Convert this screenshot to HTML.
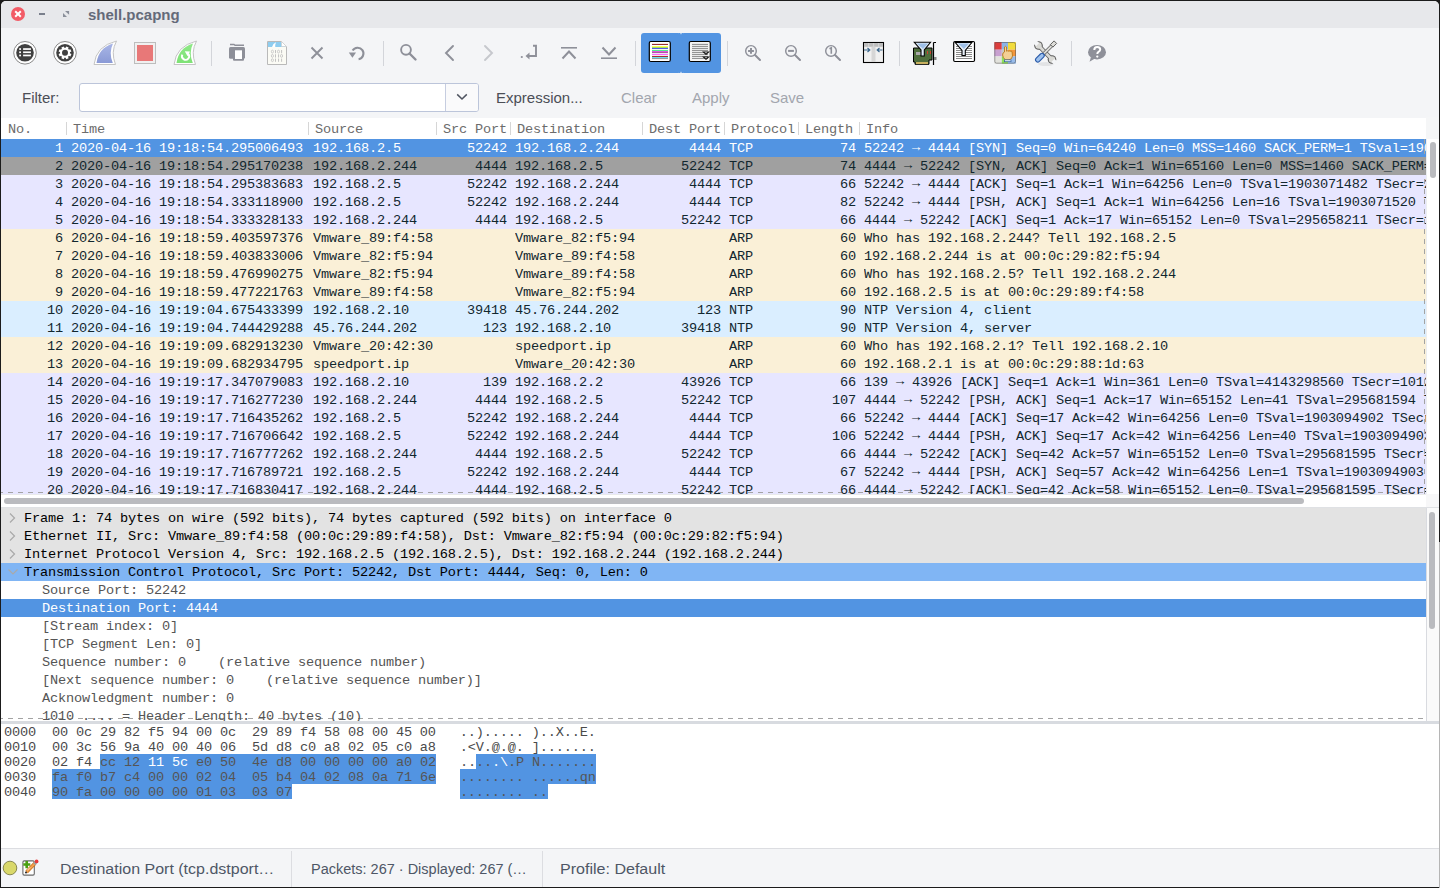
<!DOCTYPE html><html><head><meta charset="utf-8"><style>
*{margin:0;padding:0;box-sizing:border-box}
html,body{width:1440px;height:888px;overflow:hidden;background:#1b1b1b;position:relative}
.abs{position:absolute}
#win{position:absolute;left:1px;top:1px;width:1438px;height:886px;background:#f4f5f7;border-radius:5px 5px 0 0}
#title{position:absolute;left:1px;top:1px;width:1438px;height:27px;background:#e7e8eb;border-radius:5px 5px 0 0}
#title .t{position:absolute;left:87px;top:5px;font:bold 15px "Liberation Sans",sans-serif;color:#646a79}
#plist{position:absolute;left:1px;top:117px;width:1425px;height:377px;background:#fff;overflow:hidden}
.row{position:absolute;left:0;width:1425px;height:18px;font-family:"Liberation Mono",monospace;font-size:13.6px;letter-spacing:-0.16px;line-height:18px;color:#12272e;white-space:pre}
.row .c{position:absolute;top:1px;overflow:hidden;white-space:pre}
.row .cr{text-align:right}
.ar{position:relative;top:-1.5px;font-weight:bold}
.sel{background:#5294e2;color:#fff}
.syn{background:#a0a0a0}
.tcp{background:#e7e6ff}
.arp{background:#faf0d7}
.udp{background:#daeeff}
.hc{position:absolute;top:2px;font-family:"Liberation Mono",monospace;font-size:13.6px;letter-spacing:-0.16px;line-height:22px;color:#6c6c6c;white-space:pre}
.hsep{position:absolute;top:5px;width:1px;height:13px;background:#d6d6d6}
#details{position:absolute;left:1px;top:508px;width:1425px;height:213px;background:linear-gradient(#e3e3e3 0 1px,#fff 1px);overflow:hidden}
.drow{position:absolute;left:0px;width:1425px;height:18px;font-family:"Liberation Mono",monospace;font-size:13.6px;letter-spacing:-0.16px;line-height:18px;white-space:pre}
.drow .dt{position:absolute;top:1px}
.arr{position:absolute}
.top{background:#e3e3e3;color:#000}
.tcph{background:#80b5f4;color:#000}
.child{color:#555}
.dsel{background:#5294e2;color:#fff}
#hex{position:absolute;left:1px;top:724px;width:1438px;height:124px;background:#fff;overflow:hidden}
.hrow{position:absolute;left:3px;height:15px;font-family:"Liberation Mono",monospace;font-size:13.6px;letter-spacing:-0.16px;line-height:15px;color:#4a4a4a;white-space:pre}
.hrow .w{color:#fff}
.hrow .g{color:#555}
.lbl{position:absolute;font-family:"Liberation Sans",sans-serif;font-size:15px;line-height:18px;white-space:pre}
.st{position:absolute;top:11px;line-height:18px;white-space:pre;transform-origin:0 0}
#status{position:absolute;left:1px;top:848px;width:1438px;height:39px;background:#f4f5f7;border-top:1px solid #dcdde1;font-family:"Liberation Sans",sans-serif;font-size:14px;color:#4e5766}
.dashh{position:absolute;height:1px;background:repeating-linear-gradient(90deg,#a3a3a3 0 5px,transparent 5px 10px)}
.dashv{position:absolute;width:1px;background:repeating-linear-gradient(180deg,#a3a3a3 0 5px,transparent 5px 10px)}
</style></head><body>
<div id="win"></div>
<div id="title">
<svg class="abs" style="left:0;top:0" width="90" height="27"><circle cx="17" cy="13" r="7" fill="#f25b66"/><path d="M14.2 10.2 L19.8 15.8 M19.8 10.2 L14.2 15.8" stroke="#fff" stroke-width="2"/>
<rect x="38" y="12" width="6" height="2" fill="#7a7f8c"/>
<path d="M64 10 H68.1 V13.8 Z M62 12 V16.1 H66 Z" fill="#8a8f9a"/></svg>
<span class="t">shell.pcapng</span>
</div>
<svg class="abs" style="left:0;top:0" width="1440" height="117" viewBox="0 0 1440 117"><rect x="211.0" y="41" width="1" height="25" fill="#d3d5da"/><rect x="383.0" y="41" width="1" height="25" fill="#d3d5da"/><rect x="635.0" y="41" width="1" height="25" fill="#d3d5da"/><rect x="727.0" y="41" width="1" height="25" fill="#d3d5da"/><rect x="899.0" y="41" width="1" height="25" fill="#d3d5da"/><rect x="1071.0" y="41" width="1" height="25" fill="#d3d5da"/><circle cx="25" cy="52.8" r="11.3" fill="#fff" stroke="#8a8a8a" stroke-width="1"/><circle cx="25" cy="52.8" r="8.8" fill="#404040"/><rect x="19.2" y="48.2" width="1.8" height="1.7" fill="#fff"/><rect x="23.1" y="48.2" width="7.8" height="1.7" fill="#fff"/><rect x="19.2" y="51.4" width="1.8" height="1.7" fill="#fff"/><rect x="23.1" y="51.4" width="7.8" height="1.7" fill="#fff"/><rect x="19.2" y="54.6" width="1.8" height="1.7" fill="#fff"/><rect x="23.1" y="54.6" width="7.8" height="1.7" fill="#fff"/><circle cx="65" cy="52.8" r="11.3" fill="#fff" stroke="#8a8a8a" stroke-width="1"/><circle cx="65" cy="52.8" r="8.8" fill="#404040"/><g transform="translate(65 52.8)"><circle r="5" fill="#fff"/><rect x="-1.3" y="-6.4" width="2.6" height="2.5" fill="#fff" transform="rotate(22.5)"/><rect x="-1.3" y="-6.4" width="2.6" height="2.5" fill="#fff" transform="rotate(67.5)"/><rect x="-1.3" y="-6.4" width="2.6" height="2.5" fill="#fff" transform="rotate(112.5)"/><rect x="-1.3" y="-6.4" width="2.6" height="2.5" fill="#fff" transform="rotate(157.5)"/><rect x="-1.3" y="-6.4" width="2.6" height="2.5" fill="#fff" transform="rotate(202.5)"/><rect x="-1.3" y="-6.4" width="2.6" height="2.5" fill="#fff" transform="rotate(247.5)"/><rect x="-1.3" y="-6.4" width="2.6" height="2.5" fill="#fff" transform="rotate(292.5)"/><rect x="-1.3" y="-6.4" width="2.6" height="2.5" fill="#fff" transform="rotate(337.5)"/><circle r="3" fill="#404040"/></g><path d="M94 64.5 Q96 46 116.5 41 Q110.5 52 115.5 64.5 Z" fill="#fff" stroke="#c4c4c4" stroke-width="1"/><defs><linearGradient id="gb" x1="0" y1="0" x2="0" y2="1"><stop offset="0" stop-color="#a9b6e6"/><stop offset="1" stop-color="#8a9ad6"/></linearGradient><linearGradient id="gg" x1="0" y1="0" x2="0" y2="1"><stop offset="0" stop-color="#8fe888"/><stop offset="1" stop-color="#7ee276"/></linearGradient></defs><path d="M96.5 63 Q98.5 48 113 43.5 Q108.5 53 112.8 63 Z" fill="url(#gb)"/><rect x="134.5" y="42.5" width="21" height="21" fill="#f0f0f0" stroke="#bdbdbd" stroke-width="1"/><rect x="137" y="45" width="16" height="16" fill="#e87878"/><path d="M174 64.5 Q176 46 196.5 41 Q190.5 52 195.5 64.5 Z" fill="#fff" stroke="#c4c4c4" stroke-width="1"/><path d="M176.5 63 Q178.5 48 193 43.5 Q188.5 53 192.8 63 Z" fill="url(#gg)"/><path d="M188.3 53.8 A3.6 3.6 0 1 1 182.3 54.6" fill="none" stroke="#fff" stroke-width="1.9"/><path d="M184.8 51.3 L190 51.6 L187.6 56.2 Z" fill="#fff"/><path d="M230 44.5 H234 L235 45.3 H244" stroke="#8e9099" stroke-width="1.4" fill="none"/><rect x="229" y="47" width="16" height="11.7" rx="1.5" fill="#8e9099"/><rect x="233" y="49.5" width="11" height="11.3" rx="1" fill="#8e9099"/><rect x="235" y="50.3" width="7" height="8.7" fill="#fff"/><path d="M267.5 41.5 H281.5 L286.5 46.5 V64.5 H267.5 Z" fill="#fbfbf5" stroke="#b9b9b9" stroke-width="1"/><path d="M268 42 H281.3 L285.9 46.6 V47 H268 Z" fill="#8fcdef"/><path d="M272 47 Q273 43.5 276 42.2 Q275 44.5 275.3 47 Z" fill="#fff"/><path d="M281.5 41.5 V46.5 H286.5 Z" fill="#fff" stroke="#cfcfcf" stroke-width="0.7"/><ellipse cx="272.40" cy="51.6" rx="1.05" ry="1.45" fill="none" stroke="#c2c2c2" stroke-width="0.8"/><rect x="275.00" y="50.0" width="1" height="3.2" fill="#c2c2c2"/><ellipse cx="278.50" cy="51.6" rx="1.05" ry="1.45" fill="none" stroke="#c2c2c2" stroke-width="0.8"/><rect x="281.10" y="50.0" width="1" height="3.2" fill="#c2c2c2"/><ellipse cx="272.40" cy="55.9" rx="1.05" ry="1.45" fill="none" stroke="#c2c2c2" stroke-width="0.8"/><rect x="275.00" y="54.3" width="1" height="3.2" fill="#c2c2c2"/><rect x="278.05" y="54.3" width="1" height="3.2" fill="#c2c2c2"/><ellipse cx="281.55" cy="55.9" rx="1.05" ry="1.45" fill="none" stroke="#c2c2c2" stroke-width="0.8"/><ellipse cx="272.40" cy="60.2" rx="1.05" ry="1.45" fill="none" stroke="#c2c2c2" stroke-width="0.8"/><rect x="275.00" y="58.6" width="1" height="3.2" fill="#c2c2c2"/><rect x="278.05" y="58.6" width="1" height="3.2" fill="#c2c2c2"/><rect x="281.10" y="58.6" width="1" height="3.2" fill="#c2c2c2"/><path d="M311.5 47.5 L322.5 58.5 M322.5 47.5 L311.5 58.5" stroke="#8e9099" stroke-width="1.9"/><path d="M352.6 50.6 A5.8 5.8 0 1 1 358.6 59.2" fill="none" stroke="#8e9099" stroke-width="2.1"/><path d="M348.8 52.4 L356 52.4 L352.4 57.8 Z" fill="#8e9099"/><circle cx="406" cy="49.8" r="4.9" fill="none" stroke="#8e9099" stroke-width="1.9"/><path d="M409.5 53.5 L415.5 59.5" stroke="#8e9099" stroke-width="2.4" stroke-linecap="round"/><path d="M453 46 L446 53 L453 60" fill="none" stroke="#8e9099" stroke-width="1.9" stroke-linecap="round"/><path d="M485 46 L492 53 L485 60" fill="none" stroke="#c6c8cd" stroke-width="1.9" stroke-linecap="round"/><circle cx="521.8" cy="57" r="1.1" fill="#8e9099"/><path d="M533 45.8 H536 V56 H528" fill="none" stroke="#8e9099" stroke-width="1.9"/><path d="M525.5 56 L529.5 52.5 L529.5 59.5 Z" fill="#8e9099"/><path d="M561 47.8 H577" stroke="#8e9099" stroke-width="1.6"/><path d="M562.5 58.5 L569 51.5 L575.5 58.5" fill="none" stroke="#8e9099" stroke-width="2"/><path d="M601 58.2 H617" stroke="#8e9099" stroke-width="1.6"/><path d="M602.5 47.5 L609 54.5 L615.5 47.5" fill="none" stroke="#8e9099" stroke-width="2"/><rect x="641" y="33" width="40" height="40" rx="3" fill="#5294e2"/><rect x="681" y="33" width="40" height="40" rx="3" fill="#5294e2"/><rect x="679" y="33" width="4" height="40" fill="#5294e2"/><rect x="680.5" y="33" width="1" height="1.2" fill="#f4f5f7"/><rect x="680.5" y="71.8" width="1" height="1.2" fill="#f4f5f7"/><rect x="649.3" y="41.5" width="21" height="20" rx="1.5" fill="#fff" stroke="#000" stroke-width="1.2"/><rect x="652" y="43.9" width="16" height="1" fill="#8b1a1a"/><rect x="652" y="46.1" width="16" height="1" fill="#ffff40"/><rect x="652" y="47.1" width="16" height="1" fill="#a0f040"/><rect x="652" y="47.9" width="16" height="1" fill="#4848e8"/><rect x="652" y="49.9" width="16" height="1" fill="#40f080"/><rect x="652" y="51.1" width="16" height="1" fill="#e040e0"/><rect x="652" y="52.1" width="16" height="1" fill="#a05090"/><rect x="652" y="53.9" width="16" height="1" fill="#ff50ff"/><rect x="652" y="55.9" width="16" height="1" fill="#9a1a1a"/><rect x="652" y="57.2" width="16" height="1" fill="#40d8f0"/><rect x="652" y="58.1" width="16" height="1" fill="#909090"/><rect x="689.3" y="41.5" width="21" height="20" rx="1.5" fill="#f4f4f4" stroke="#000" stroke-width="1.2"/><rect x="692" y="43.9" width="16" height="1" fill="#8a8a8a"/><rect x="692" y="45.9" width="16" height="1" fill="#8a8a8a"/><rect x="692" y="47.9" width="16" height="1" fill="#8a8a8a"/><rect x="692" y="49.9" width="16" height="1" fill="#8a8a8a"/><rect x="692" y="51.9" width="16" height="1" fill="#8a8a8a"/><rect x="692" y="53.9" width="16" height="1" fill="#8a8a8a"/><rect x="692" y="55.9" width="16" height="1" fill="#8a8a8a"/><rect x="692" y="57.9" width="16" height="1" fill="#8a8a8a"/><path d="M702 51.5 H710 L706 55 Z M702 56.5 H710 L706 60 Z" fill="#111"/><path d="M704.5 52.3 H707.5 L706 53.6 Z M704.5 57.3 H707.5 L706 58.6 Z" fill="#ccc"/><circle cx="751" cy="50.9" r="5.3" fill="none" stroke="#8e9099" stroke-width="1.45"/><path d="M755 55 L760 60" stroke="#8e9099" stroke-width="2" stroke-linecap="round"/><path d="M748.1 50.9 H753.9 M751 48 V53.8" stroke="#8e9099" stroke-width="2"/><circle cx="791" cy="50.9" r="5.3" fill="none" stroke="#8e9099" stroke-width="1.45"/><path d="M795 55 L800 60" stroke="#8e9099" stroke-width="2" stroke-linecap="round"/><path d="M788.1 50.9 H793.9" stroke="#8e9099" stroke-width="2"/><circle cx="831" cy="50.9" r="5.3" fill="none" stroke="#8e9099" stroke-width="1.45"/><path d="M835 55 L840 60" stroke="#8e9099" stroke-width="2" stroke-linecap="round"/><path d="M829.5 48.8 L831.3 47.8 V53.8" fill="none" stroke="#8e9099" stroke-width="1.6"/><rect x="863.5" y="42.5" width="20" height="20" fill="#f0f0f0" stroke="#000" stroke-width="1.1"/><rect x="864" y="43" width="19" height="3.8" fill="#bdbdbd"/><rect x="868.5" y="43" width="0.6" height="3.8" fill="#e8e8e8"/><rect x="873.5" y="43" width="0.6" height="3.8" fill="#e8e8e8"/><rect x="878.5" y="43" width="0.6" height="3.8" fill="#e8e8e8"/><rect x="871.5" y="46.8" width="4" height="15.2" fill="#d6d6d6"/><path d="M864 50 H869.5 M867.5 48 L869.8 50 L867.5 52 M882.5 50 H877.5 M879.5 48 L877.2 50 L879.5 52" fill="none" stroke="#3f6a8f" stroke-width="1.2"/><path d="M913.5 48 H932 V60 H929 V64.3 H915 V62 H913.5 Z" fill="#4f6e3c" stroke="#000" stroke-width="1"/><rect x="916" y="62" width="12" height="2" fill="#c8b060"/><rect x="916" y="52" width="5" height="3" fill="#aaa"/><rect x="927" y="51" width="1" height="3" fill="#d04030"/><rect x="930" y="51" width="1" height="3" fill="#d04030"/><path d="M933.5 42.5 V65 M933.5 42.5 H936" stroke="#000" stroke-width="1.2" fill="none"/><rect x="934" y="57" width="2.5" height="3" fill="#888"/><path d="M914.3 42.3 H930.5 L924.3 50 V56 H921 V50 Z" fill="#e0ecf8" stroke="#000" stroke-width="1.1"/><path d="M917 43.5 H928 L923 49 Z" fill="#9fc0e8"/><rect x="953.7" y="41.5" width="20.8" height="20" rx="1.2" fill="#fff" stroke="#000" stroke-width="1.2"/><rect x="956" y="46.0" width="16" height="1" fill="#8a8a8a"/><rect x="956" y="48.0" width="16" height="1" fill="#8a8a8a"/><rect x="956" y="50.0" width="16" height="1" fill="#8a8a8a"/><rect x="956" y="52.0" width="16" height="1" fill="#8a8a8a"/><rect x="956" y="54.0" width="16" height="1" fill="#8a8a8a"/><rect x="956" y="56.0" width="16" height="1" fill="#8a8a8a"/><rect x="956" y="58.0" width="16" height="1" fill="#8a8a8a"/><path d="M955.3 42.5 H971.8 L965.3 50.5 V55.5 H962 V50.5 Z" fill="#e8f0fa" stroke="#000" stroke-width="1.1"/><path d="M958 43.5 H969 L964 49 Z" fill="#9fc0e8"/><rect x="994.3" y="42" width="7.5" height="7.700000000000003" fill="#dd3c3c"/><rect x="1001.8" y="42" width="6.2000000000000455" height="7.700000000000003" fill="#8cb4e6"/><rect x="1008" y="42" width="8" height="7.700000000000003" fill="#f2dc3c"/><rect x="994.3" y="49.7" width="7.5" height="6.699999999999996" fill="#c8a0d0"/><rect x="1001.8" y="49.7" width="6.2000000000000455" height="6.699999999999996" fill="#c8c8c8"/><rect x="1008" y="49.7" width="8" height="6.699999999999996" fill="#f4963c"/><rect x="994.3" y="56.4" width="7.5" height="7.300000000000004" fill="#e2e2dc"/><rect x="1001.8" y="56.4" width="6.2000000000000455" height="7.300000000000004" fill="#8ee05a"/><rect x="1008" y="56.4" width="8" height="7.300000000000004" fill="#98bceb"/><rect x="994.8" y="42.5" width="20.7" height="20.7" rx="1.8" fill="none" stroke="#555" stroke-opacity="0.55" stroke-width="1"/><path d="M1004.5 52 V47 Q1005.5 45.6 1006.5 47 V51.2 Q1007.4 50.4 1008.3 51.2 Q1009.2 50.5 1010.1 51.3 Q1011 50.6 1012 51.6 L1012.5 56 Q1012 59.5 1009 59.8 L1005.5 59.8 Q1002.8 58 1002.6 55 Q1002.5 52.6 1004.5 52 Z" fill="#f3cf94" stroke="#b87818" stroke-width="0.9"/><rect x="1004.6" y="59.9" width="6.4" height="1.8" fill="#fff" stroke="#3060a0" stroke-width="0.7"/><ellipse cx="1046" cy="64" rx="8" ry="2" fill="#000" opacity="0.07"/><path d="M1038.5 45.5 L1052 59.5" stroke="#5a5a5a" stroke-width="4.4"/><circle cx="1038.5" cy="45.5" r="4.3" fill="#5a5a5a"/><circle cx="1052" cy="59.5" r="4.3" fill="#5a5a5a"/><path d="M1038.5 45.5 L1052 59.5" stroke="#d9d9d5" stroke-width="2.8"/><circle cx="1038.5" cy="45.5" r="3.2" fill="#d9d9d5"/><circle cx="1052" cy="59.5" r="3.2" fill="#d9d9d5"/><rect x="-1.8" y="-2.2" width="3.6" height="4.4" fill="#f4f5f7" transform="translate(1036.3 43.3) rotate(45)"/><rect x="-1.8" y="-2.2" width="3.6" height="4.4" fill="#f4f5f7" transform="translate(1054.2 61.7) rotate(45)"/><path d="M1044 53.5 L1053 44.5" stroke="#5a5a5a" stroke-width="3.2"/><path d="M1044 53.5 L1053 44.5" stroke="#dcdcd8" stroke-width="1.8"/><rect x="-2.6" y="-1.8" width="5.2" height="3.6" fill="#dcdcd8" stroke="#5a5a5a" stroke-width="0.9" transform="translate(1053.5 44) rotate(-45)"/><path d="M1037.8 59.8 L1042 55.6" stroke="#2a5aa8" stroke-width="5.6" stroke-linecap="round"/><path d="M1037.8 59.8 L1042 55.6" stroke="#9dc1ee" stroke-width="3.4" stroke-linecap="round"/><ellipse cx="1097" cy="52.2" rx="9" ry="7.3" fill="#8e9099"/><path d="M1091 57 L1089.5 61.8 L1095 58.5 Z" fill="#8e9099"/><path d="M1094.3 50 Q1094.3 47 1097.2 47 Q1100.2 47 1100.2 49.5 Q1100.2 51 1098.5 51.8 Q1097.3 52.5 1097.3 54" fill="none" stroke="#fff" stroke-width="2"/><circle cx="1097.3" cy="56.6" r="1.15" fill="#fff"/></svg>
<span class="lbl" style="left:22px;top:89px;color:#4b4e56">Filter:</span>
<div class="abs" style="left:79px;top:83px;width:400px;height:29px;background:#fff;border:1px solid #bcc5da;border-radius:3px"></div>
<div class="abs" style="left:445px;top:84px;width:33px;height:27px;background:#fafafb;border-left:1px solid #c6cde0;border-radius:0 2px 2px 0"></div>
<svg class="abs" style="left:456px;top:93px" width="12" height="8"><path d="M1.2 1.4 L6 6 L10.8 1.4" fill="none" stroke="#4f5460" stroke-width="1.5"/></svg>
<span class="lbl" style="left:496px;top:89px;color:#4b4e56">Expression...</span>
<span class="lbl" style="left:621px;top:89px;color:#a2a6ae">Clear</span>
<span class="lbl" style="left:692px;top:89px;color:#a2a6ae">Apply</span>
<span class="lbl" style="left:770px;top:89px;color:#a2a6ae">Save</span>

<div id="plist"><span class="hc" style="left:7px">No.</span><span class="hc" style="left:72px">Time</span><span class="hsep" style="left:65px"></span><span class="hc" style="left:314px">Source</span><span class="hsep" style="left:307px"></span><span class="hc" style="left:442px">Src Port</span><span class="hsep" style="left:435px"></span><span class="hc" style="left:516px">Destination</span><span class="hsep" style="left:509px"></span><span class="hc" style="left:648px">Dest Port</span><span class="hsep" style="left:641px"></span><span class="hc" style="left:730px">Protocol</span><span class="hsep" style="left:723px"></span><span class="hc" style="left:804px">Length</span><span class="hsep" style="left:797px"></span><span class="hc" style="left:865px">Info</span><span class="hsep" style="left:858px"></span><div class="row sel" style="top:22px"><span class="c cr" style="left:0px;width:62px">1</span><span class="c" style="left:70px;width:237px">2020-04-16 19:18:54.295006493</span><span class="c" style="left:312px;width:123px">192.168.2.5</span><span class="c cr" style="left:435px;width:71px">52242</span><span class="c" style="left:514px;width:127px">192.168.2.244</span><span class="c cr" style="left:641px;width:79px">4444</span><span class="c" style="left:728px;width:69px">TCP</span><span class="c cr" style="left:797px;width:58px">74</span><span class="c" style="left:863px;width:562px">52242 <span class="ar">→</span> 4444 [SYN] Seq=0 Win=64240 Len=0 MSS=1460 SACK_PERM=1 TSval=1903071482 TSecr=0 WS=128</span></div><div class="row syn" style="top:40px"><span class="c cr" style="left:0px;width:62px">2</span><span class="c" style="left:70px;width:237px">2020-04-16 19:18:54.295170238</span><span class="c" style="left:312px;width:123px">192.168.2.244</span><span class="c cr" style="left:435px;width:71px">4444</span><span class="c" style="left:514px;width:127px">192.168.2.5</span><span class="c cr" style="left:641px;width:79px">52242</span><span class="c" style="left:728px;width:69px">TCP</span><span class="c cr" style="left:797px;width:58px">74</span><span class="c" style="left:863px;width:562px">4444 <span class="ar">→</span> 52242 [SYN, ACK] Seq=0 Ack=1 Win=65160 Len=0 MSS=1460 SACK_PERM=1 TSval=295658172</span></div><div class="row tcp" style="top:58px"><span class="c cr" style="left:0px;width:62px">3</span><span class="c" style="left:70px;width:237px">2020-04-16 19:18:54.295383683</span><span class="c" style="left:312px;width:123px">192.168.2.5</span><span class="c cr" style="left:435px;width:71px">52242</span><span class="c" style="left:514px;width:127px">192.168.2.244</span><span class="c cr" style="left:641px;width:79px">4444</span><span class="c" style="left:728px;width:69px">TCP</span><span class="c cr" style="left:797px;width:58px">66</span><span class="c" style="left:863px;width:562px">52242 <span class="ar">→</span> 4444 [ACK] Seq=1 Ack=1 Win=64256 Len=0 TSval=1903071482 TSecr=295658172</span></div><div class="row tcp" style="top:76px"><span class="c cr" style="left:0px;width:62px">4</span><span class="c" style="left:70px;width:237px">2020-04-16 19:18:54.333118900</span><span class="c" style="left:312px;width:123px">192.168.2.5</span><span class="c cr" style="left:435px;width:71px">52242</span><span class="c" style="left:514px;width:127px">192.168.2.244</span><span class="c cr" style="left:641px;width:79px">4444</span><span class="c" style="left:728px;width:69px">TCP</span><span class="c cr" style="left:797px;width:58px">82</span><span class="c" style="left:863px;width:562px">52242 <span class="ar">→</span> 4444 [PSH, ACK] Seq=1 Ack=1 Win=64256 Len=16 TSval=1903071520 TSecr=295658172</span></div><div class="row tcp" style="top:94px"><span class="c cr" style="left:0px;width:62px">5</span><span class="c" style="left:70px;width:237px">2020-04-16 19:18:54.333328133</span><span class="c" style="left:312px;width:123px">192.168.2.244</span><span class="c cr" style="left:435px;width:71px">4444</span><span class="c" style="left:514px;width:127px">192.168.2.5</span><span class="c cr" style="left:641px;width:79px">52242</span><span class="c" style="left:728px;width:69px">TCP</span><span class="c cr" style="left:797px;width:58px">66</span><span class="c" style="left:863px;width:562px">4444 <span class="ar">→</span> 52242 [ACK] Seq=1 Ack=17 Win=65152 Len=0 TSval=295658211 TSecr=1903071520</span></div><div class="row arp" style="top:112px"><span class="c cr" style="left:0px;width:62px">6</span><span class="c" style="left:70px;width:237px">2020-04-16 19:18:59.403597376</span><span class="c" style="left:312px;width:123px">Vmware_89:f4:58</span><span class="c" style="left:514px;width:127px">Vmware_82:f5:94</span><span class="c" style="left:728px;width:69px">ARP</span><span class="c cr" style="left:797px;width:58px">60</span><span class="c" style="left:863px;width:562px">Who has 192.168.2.244? Tell 192.168.2.5</span></div><div class="row arp" style="top:130px"><span class="c cr" style="left:0px;width:62px">7</span><span class="c" style="left:70px;width:237px">2020-04-16 19:18:59.403833006</span><span class="c" style="left:312px;width:123px">Vmware_82:f5:94</span><span class="c" style="left:514px;width:127px">Vmware_89:f4:58</span><span class="c" style="left:728px;width:69px">ARP</span><span class="c cr" style="left:797px;width:58px">60</span><span class="c" style="left:863px;width:562px">192.168.2.244 is at 00:0c:29:82:f5:94</span></div><div class="row arp" style="top:148px"><span class="c cr" style="left:0px;width:62px">8</span><span class="c" style="left:70px;width:237px">2020-04-16 19:18:59.476990275</span><span class="c" style="left:312px;width:123px">Vmware_82:f5:94</span><span class="c" style="left:514px;width:127px">Vmware_89:f4:58</span><span class="c" style="left:728px;width:69px">ARP</span><span class="c cr" style="left:797px;width:58px">60</span><span class="c" style="left:863px;width:562px">Who has 192.168.2.5? Tell 192.168.2.244</span></div><div class="row arp" style="top:166px"><span class="c cr" style="left:0px;width:62px">9</span><span class="c" style="left:70px;width:237px">2020-04-16 19:18:59.477221763</span><span class="c" style="left:312px;width:123px">Vmware_89:f4:58</span><span class="c" style="left:514px;width:127px">Vmware_82:f5:94</span><span class="c" style="left:728px;width:69px">ARP</span><span class="c cr" style="left:797px;width:58px">60</span><span class="c" style="left:863px;width:562px">192.168.2.5 is at 00:0c:29:89:f4:58</span></div><div class="row udp" style="top:184px"><span class="c cr" style="left:0px;width:62px">10</span><span class="c" style="left:70px;width:237px">2020-04-16 19:19:04.675433399</span><span class="c" style="left:312px;width:123px">192.168.2.10</span><span class="c cr" style="left:435px;width:71px">39418</span><span class="c" style="left:514px;width:127px">45.76.244.202</span><span class="c cr" style="left:641px;width:79px">123</span><span class="c" style="left:728px;width:69px">NTP</span><span class="c cr" style="left:797px;width:58px">90</span><span class="c" style="left:863px;width:562px">NTP Version 4, client</span></div><div class="row udp" style="top:202px"><span class="c cr" style="left:0px;width:62px">11</span><span class="c" style="left:70px;width:237px">2020-04-16 19:19:04.744429288</span><span class="c" style="left:312px;width:123px">45.76.244.202</span><span class="c cr" style="left:435px;width:71px">123</span><span class="c" style="left:514px;width:127px">192.168.2.10</span><span class="c cr" style="left:641px;width:79px">39418</span><span class="c" style="left:728px;width:69px">NTP</span><span class="c cr" style="left:797px;width:58px">90</span><span class="c" style="left:863px;width:562px">NTP Version 4, server</span></div><div class="row arp" style="top:220px"><span class="c cr" style="left:0px;width:62px">12</span><span class="c" style="left:70px;width:237px">2020-04-16 19:19:09.682913230</span><span class="c" style="left:312px;width:123px">Vmware_20:42:30</span><span class="c" style="left:514px;width:127px">speedport.ip</span><span class="c" style="left:728px;width:69px">ARP</span><span class="c cr" style="left:797px;width:58px">60</span><span class="c" style="left:863px;width:562px">Who has 192.168.2.1? Tell 192.168.2.10</span></div><div class="row arp" style="top:238px"><span class="c cr" style="left:0px;width:62px">13</span><span class="c" style="left:70px;width:237px">2020-04-16 19:19:09.682934795</span><span class="c" style="left:312px;width:123px">speedport.ip</span><span class="c" style="left:514px;width:127px">Vmware_20:42:30</span><span class="c" style="left:728px;width:69px">ARP</span><span class="c cr" style="left:797px;width:58px">60</span><span class="c" style="left:863px;width:562px">192.168.2.1 is at 00:0c:29:88:1d:63</span></div><div class="row tcp" style="top:256px"><span class="c cr" style="left:0px;width:62px">14</span><span class="c" style="left:70px;width:237px">2020-04-16 19:19:17.347079083</span><span class="c" style="left:312px;width:123px">192.168.2.10</span><span class="c cr" style="left:435px;width:71px">139</span><span class="c" style="left:514px;width:127px">192.168.2.2</span><span class="c cr" style="left:641px;width:79px">43926</span><span class="c" style="left:728px;width:69px">TCP</span><span class="c cr" style="left:797px;width:58px">66</span><span class="c" style="left:863px;width:562px">139 <span class="ar">→</span> 43926 [ACK] Seq=1 Ack=1 Win=361 Len=0 TSval=4143298560 TSecr=1012345678</span></div><div class="row tcp" style="top:274px"><span class="c cr" style="left:0px;width:62px">15</span><span class="c" style="left:70px;width:237px">2020-04-16 19:19:17.716277230</span><span class="c" style="left:312px;width:123px">192.168.2.244</span><span class="c cr" style="left:435px;width:71px">4444</span><span class="c" style="left:514px;width:127px">192.168.2.5</span><span class="c cr" style="left:641px;width:79px">52242</span><span class="c" style="left:728px;width:69px">TCP</span><span class="c cr" style="left:797px;width:58px">107</span><span class="c" style="left:863px;width:562px">4444 <span class="ar">→</span> 52242 [PSH, ACK] Seq=1 Ack=17 Win=65152 Len=41 TSval=295681594 TSecr=1903071520</span></div><div class="row tcp" style="top:292px"><span class="c cr" style="left:0px;width:62px">16</span><span class="c" style="left:70px;width:237px">2020-04-16 19:19:17.716435262</span><span class="c" style="left:312px;width:123px">192.168.2.5</span><span class="c cr" style="left:435px;width:71px">52242</span><span class="c" style="left:514px;width:127px">192.168.2.244</span><span class="c cr" style="left:641px;width:79px">4444</span><span class="c" style="left:728px;width:69px">TCP</span><span class="c cr" style="left:797px;width:58px">66</span><span class="c" style="left:863px;width:562px">52242 <span class="ar">→</span> 4444 [ACK] Seq=17 Ack=42 Win=64256 Len=0 TSval=1903094902 TSecr=295681594</span></div><div class="row tcp" style="top:310px"><span class="c cr" style="left:0px;width:62px">17</span><span class="c" style="left:70px;width:237px">2020-04-16 19:19:17.716706642</span><span class="c" style="left:312px;width:123px">192.168.2.5</span><span class="c cr" style="left:435px;width:71px">52242</span><span class="c" style="left:514px;width:127px">192.168.2.244</span><span class="c cr" style="left:641px;width:79px">4444</span><span class="c" style="left:728px;width:69px">TCP</span><span class="c cr" style="left:797px;width:58px">106</span><span class="c" style="left:863px;width:562px">52242 <span class="ar">→</span> 4444 [PSH, ACK] Seq=17 Ack=42 Win=64256 Len=40 TSval=1903094903 TSecr=295681594</span></div><div class="row tcp" style="top:328px"><span class="c cr" style="left:0px;width:62px">18</span><span class="c" style="left:70px;width:237px">2020-04-16 19:19:17.716777262</span><span class="c" style="left:312px;width:123px">192.168.2.244</span><span class="c cr" style="left:435px;width:71px">4444</span><span class="c" style="left:514px;width:127px">192.168.2.5</span><span class="c cr" style="left:641px;width:79px">52242</span><span class="c" style="left:728px;width:69px">TCP</span><span class="c cr" style="left:797px;width:58px">66</span><span class="c" style="left:863px;width:562px">4444 <span class="ar">→</span> 52242 [ACK] Seq=42 Ack=57 Win=65152 Len=0 TSval=295681595 TSecr=1903094903</span></div><div class="row tcp" style="top:346px"><span class="c cr" style="left:0px;width:62px">19</span><span class="c" style="left:70px;width:237px">2020-04-16 19:19:17.716789721</span><span class="c" style="left:312px;width:123px">192.168.2.5</span><span class="c cr" style="left:435px;width:71px">52242</span><span class="c" style="left:514px;width:127px">192.168.2.244</span><span class="c cr" style="left:641px;width:79px">4444</span><span class="c" style="left:728px;width:69px">TCP</span><span class="c cr" style="left:797px;width:58px">67</span><span class="c" style="left:863px;width:562px">52242 <span class="ar">→</span> 4444 [PSH, ACK] Seq=57 Ack=42 Win=64256 Len=1 TSval=1903094903 TSecr=295681595</span></div><div class="row tcp" style="top:364px"><div class="dashh" style="left:-3px;top:11px;width:1427px"></div><span class="c cr" style="left:0px;width:62px">20</span><span class="c" style="left:70px;width:237px">2020-04-16 19:19:17.716830417</span><span class="c" style="left:312px;width:123px">192.168.2.244</span><span class="c cr" style="left:435px;width:71px">4444</span><span class="c" style="left:514px;width:127px">192.168.2.5</span><span class="c cr" style="left:641px;width:79px">52242</span><span class="c" style="left:728px;width:69px">TCP</span><span class="c cr" style="left:797px;width:58px">66</span><span class="c" style="left:863px;width:562px">4444 <span class="ar">→</span> 52242 [ACK] Seq=42 Ack=58 Win=65152 Len=0 TSval=295681595 TSecr=1903094903</span></div>
<div class="dashv" style="left:1423px;top:22px;height:355px"></div>
</div>
<div class="abs" style="left:1px;top:117px;width:1425px;height:1px;background:#f4f5f7"></div>
<div class="abs" style="left:1426px;top:117px;width:13px;height:22px;background:#f5f6f7"></div>
<div class="abs" style="left:1426px;top:139px;width:13px;height:355px;background:#fff;border-left:1px solid #eceef0"></div>
<div class="abs" style="left:1430px;top:142px;width:6px;height:36px;border-radius:3px;background:#babbbf"></div>
<div class="abs" style="left:1px;top:494px;width:1425px;height:13px;background:#fff;border-top:1px solid #e9eaec"></div>
<div class="abs" style="left:4px;top:498px;width:1300px;height:6px;border-radius:3px;background:#babbbf"></div>
<div class="abs" style="left:1426px;top:494px;width:13px;height:13px;background:#f7f7f8"></div>
<div class="abs" style="left:1px;top:507px;width:1438px;height:1px;background:#dfe1e4"></div>
<div id="details"><div class="drow top" style="top:1px"><svg class="arr" style="left:7px;top:3px" width="10" height="12"><path d="M2 1.5 L6.5 6 L2 10.5" fill="none" stroke="#a9a9a9" stroke-width="1.2"/></svg><span class="dt" style="left:23px">Frame 1: 74 bytes on wire (592 bits), 74 bytes captured (592 bits) on interface 0</span></div><div class="drow top" style="top:19px"><svg class="arr" style="left:7px;top:3px" width="10" height="12"><path d="M2 1.5 L6.5 6 L2 10.5" fill="none" stroke="#a9a9a9" stroke-width="1.2"/></svg><span class="dt" style="left:23px">Ethernet II, Src: Vmware_89:f4:58 (00:0c:29:89:f4:58), Dst: Vmware_82:f5:94 (00:0c:29:82:f5:94)</span></div><div class="drow top" style="top:37px"><svg class="arr" style="left:7px;top:3px" width="10" height="12"><path d="M2 1.5 L6.5 6 L2 10.5" fill="none" stroke="#a9a9a9" stroke-width="1.2"/></svg><span class="dt" style="left:23px">Internet Protocol Version 4, Src: 192.168.2.5 (192.168.2.5), Dst: 192.168.2.244 (192.168.2.244)</span></div><div class="drow tcph" style="top:55px"><svg class="arr" style="left:6px;top:5px" width="12" height="8"><path d="M1.5 1.5 L6 6 L10.5 1.5" fill="none" stroke="#a9a9a9" stroke-width="1.2"/></svg><span class="dt" style="left:23px">Transmission Control Protocol, Src Port: 52242, Dst Port: 4444, Seq: 0, Len: 0</span></div><div class="drow child" style="top:73px"><span class="dt" style="left:41px">Source Port: 52242</span></div><div class="drow dsel" style="top:91px"><span class="dt" style="left:41px">Destination Port: 4444</span></div><div class="drow child" style="top:109px"><span class="dt" style="left:41px">[Stream index: 0]</span></div><div class="drow child" style="top:127px"><span class="dt" style="left:41px">[TCP Segment Len: 0]</span></div><div class="drow child" style="top:145px"><span class="dt" style="left:41px">Sequence number: 0    (relative sequence number)</span></div><div class="drow child" style="top:163px"><span class="dt" style="left:41px">[Next sequence number: 0    (relative sequence number)]</span></div><div class="drow child" style="top:181px"><span class="dt" style="left:41px">Acknowledgment number: 0</span></div><div class="drow child" style="top:199px"><div class="dashh" style="left:-3px;top:11px;width:1427px"></div><span class="dt" style="left:41px">1010 .... = Header Length: 40 bytes (10)</span></div>
</div>
<div class="abs" style="left:1426px;top:508px;width:13px;height:213px;background:#fafafa;border-left:1px solid #d9dbe0"></div>
<div class="abs" style="left:1429px;top:512px;width:6px;height:117px;border-radius:3px;background:#babbbf"></div>
<div class="abs" style="left:1px;top:721px;width:1438px;height:3px;background:#d8dbe0"></div>
<div id="hex"><div class="abs" style="left:99px;top:30px;width:336px;height:15px;background:#5294e2"></div><div class="abs" style="left:51px;top:45px;width:384px;height:15px;background:#5294e2"></div><div class="abs" style="left:51px;top:60px;width:240px;height:15px;background:#5294e2"></div><div class="abs" style="left:475px;top:30px;width:120px;height:15px;background:#5294e2"></div><div class="abs" style="left:459px;top:45px;width:136px;height:15px;background:#5294e2"></div><div class="abs" style="left:459px;top:60px;width:88px;height:15px;background:#5294e2"></div><div class="hrow" style="top:1px">0000  00 0c 29 82 f5 94 00 0c  29 89 f4 58 08 00 45 00   ..)..... )..X..E.</div><div class="hrow" style="top:16px">0010  00 3c 56 9a 40 00 40 06  5d d8 c0 a8 02 05 c0 a8   .&lt;V.@.@. ].......</div><div class="hrow" style="top:31px">0020  02 f4 <span class="g">cc 12 <span class="w">11 5c</span> e0 50  4e d8 00 00 00 00 a0 02   ....<span class="w">.\</span>.P N.......</span></div><div class="hrow" style="top:46px">0030  <span class="g">fa f0 b7 c4 00 00 02 04  05 b4 04 02 08 0a 71 6e   ........ ......qn</span></div><div class="hrow" style="top:61px">0040  <span class="g">90 fa 00 00 00 00 01 03  03 07                     ........ ..</span></div></div>
<div id="status">
<svg class="abs" style="left:1px;top:11px" width="16" height="16"><circle cx="8" cy="8" r="6.8" fill="#d9d86a" stroke="#7d7d45" stroke-width="0.9"/></svg>
<svg class="abs" style="left:0;top:0" width="44" height="38"><rect x="21.9" y="11.9" width="11.4" height="14.2" rx="1.3" fill="#fff" stroke="#6a6a6a" stroke-width="1.1"/><path d="M22.3 14.2 H29.3 V16.8 H22.3 Z M24.4 11.9 H27 V19.2 H24.4 Z" fill="#4a9e10"/><path d="M25.6 23 L34 14.3" stroke="#c86a10" stroke-width="3.4"/><path d="M25.6 23 L34 14.3" stroke="#f0a050" stroke-width="2.2"/><path d="M26.3 21.3 L29 18.5" stroke="#fff" stroke-width="0.9" opacity="0.8"/><path d="M33.2 15.2 L34.9 13.4" stroke="#a0a0a0" stroke-width="3.2"/><circle cx="35.6" cy="12.4" r="1.9" fill="#e83a3a"/><circle cx="25" cy="23.6" r="1" fill="#222"/></svg>
<span class="st" style="left:59px;transform:scaleX(1.143)">Destination Port (tcp.dstport…</span>
<div class="abs" style="left:290px;top:2px;width:1px;height:36px;background:#dcdde1"></div>
<span class="st" style="left:310px;transform:scaleX(1.035)">Packets: 267 · Displayed: 267 (…</span>
<div class="abs" style="left:541px;top:2px;width:1px;height:36px;background:#dcdde1"></div>
<span class="st" style="left:559px;transform:scaleX(1.146)">Profile: Default</span>
</div>
<div class="abs" style="left:1439px;top:542px;width:1px;height:346px;background:#b5b5b5"></div>
</body></html>
